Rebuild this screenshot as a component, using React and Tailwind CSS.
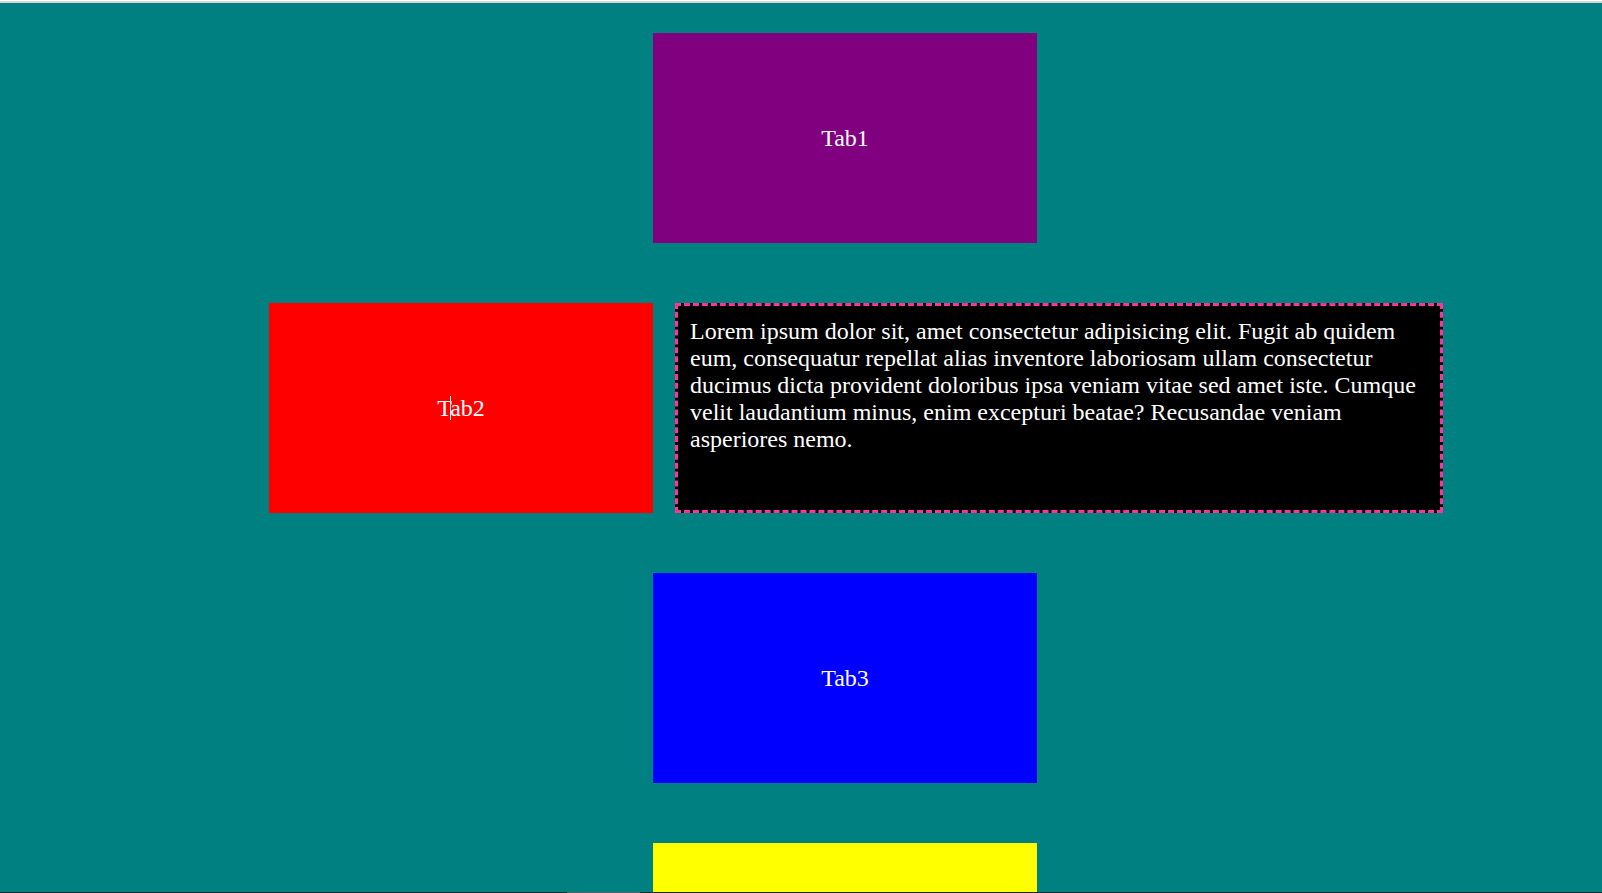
import React from 'react';

const serif = { fontFamily: '"Liberation Serif", "Times New Roman", serif' };

const Tab = ({ label, color, caret }) => (
  <div className={`w-[384px] h-[210px] shrink-0 flex items-center justify-center text-white text-[24px] ${color}`}>
    {caret ? (
      <span className="relative">
        Tab2
        <span className="absolute left-[13px] top-[6px] w-px h-[24px] bg-white" />
      </span>
    ) : (
      label
    )}
  </div>
);

export default function App() {
  return (
    <div className="h-[893px] overflow-hidden bg-[#008080] flex flex-col" style={serif}>
      <div className="h-[1px] bg-white shrink-0" />
      <div className="h-[2px] bg-[#d6d6d6] shrink-0" />
      <div className="flex-1 flex flex-col gap-[60px] pt-[30px] overflow-hidden">
        <div className="flex pl-[653px]">
          <Tab label="Tab1" color="bg-[#800080]" />
        </div>
        <div className="flex pl-[269px]">
          <Tab label="Tab2" color="bg-[#ff0000]" caret />
          <div className="ml-[22px] w-[768px] h-[210px] shrink-0 bg-black border-[3px] border-dashed border-[#ff3399] pl-[12px] pr-[14px] pt-[12px] text-white text-[24px] leading-[27px]">
            Lorem ipsum dolor sit, amet consectetur adipisicing elit. Fugit ab quidem eum, consequatur repellat alias
            inventore laboriosam ullam consectetur ducimus dicta provident doloribus ipsa veniam vitae sed amet iste.
            Cumque velit laudantium minus, enim excepturi beatae? Recusandae veniam asperiores nemo.
          </div>
        </div>
        <div className="flex pl-[653px]">
          <Tab label="Tab3" color="bg-[#0000ff]" />
        </div>
        <div className="flex pl-[653px]">
          <Tab label="" color="bg-[#ffff00]" />
        </div>
      </div>
      <div className="h-[1px] shrink-0 bg-[#1c2a30] flex">
        <div className="ml-[567px] w-[73px] bg-[#5a5f63]" />
      </div>
    </div>
  );
}
